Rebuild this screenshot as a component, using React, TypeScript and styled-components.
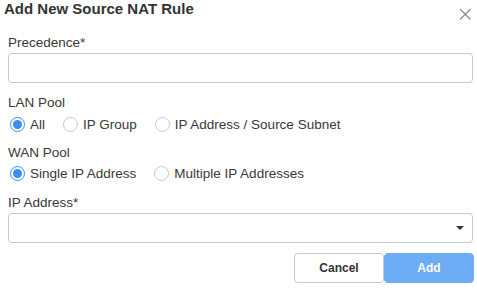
import React from "react";
import styled, { createGlobalStyle } from "styled-components";

const Global = createGlobalStyle`
  html, body { margin: 0; padding: 0; background: #fff; }
  body { font-family: "Liberation Sans", Arial, sans-serif; color: #333; }
  * { box-sizing: border-box; }
`;

const Dialog = styled.div`
  width: 477px;
  height: 288px;
  display: flex;
  flex-direction: column;
`;

const Header = styled.div`
  display: flex;
  justify-content: space-between;
  align-items: flex-start;
  padding: 0 6px 0 4px;
`;

const Title = styled.h2`
  margin: 0;
  font-size: 15px;
  font-weight: 700;
  color: #333;
  line-height: 18px;
`;

const Close = styled.button`
  border: 0;
  background: none;
  padding: 0;
  margin-top: 8px;
  width: 12px;
  height: 12px;
  display: flex;
  cursor: pointer;
`;

const Body = styled.div`
  display: flex;
  flex-direction: column;
  padding: 0 4px 0 8px;
`;

const Field = styled.div<{ $top: number }>`
  display: flex;
  flex-direction: column;
  margin-top: ${(p) => p.$top}px;
`;

const Label = styled.label<{ $gap?: number }>`
  font-size: 13.5px;
  color: #383838;
  line-height: 18px;
  margin-bottom: ${(p) => p.$gap ?? 1}px;
`;

const Input = styled.input`
  width: 465px;
  height: 30px;
  border: 1px solid #c8c8c8;
  border-radius: 4px;
  outline: none;
`;

const RadioRow = styled.div`
  display: flex;
  align-items: center;
  gap: 16px;
  height: 22px;
`;

const RadioOption = styled.label`
  display: flex;
  align-items: center;
  gap: 5px;
  font-size: 13.5px;
  color: #383838;
  cursor: pointer;
`;

const Circle = styled.span<{ $checked?: boolean }>`
  width: 15px;
  height: 15px;
  border-radius: 50%;
  border: 1px solid ${(p) => (p.$checked ? "#3b8ef0" : "#c9c9c9")};
  display: inline-flex;
  align-items: center;
  justify-content: center;
  margin-left: 2px;
  &::after {
    content: "";
    width: 9px;
    height: 9px;
    border-radius: 50%;
    background: ${(p) => (p.$checked ? "#3b8ef0" : "transparent")};
  }
`;

const Select = styled.div`
  width: 465px;
  height: 30px;
  border: 1px solid #c8c8c8;
  border-radius: 4px;
  display: flex;
  align-items: center;
  justify-content: flex-end;
  padding-right: 8px;
`;

const Caret = styled.span`
  width: 0;
  height: 0;
  border-left: 4px solid transparent;
  border-right: 4px solid transparent;
  border-top: 4px solid #333;
`;

const Footer = styled.div`
  display: flex;
  justify-content: flex-end;
  margin-top: 10px;
  width: 466px;
`;

const Button = styled.button<{ $primary?: boolean }>`
  width: 90px;
  height: 30px;
  border-radius: 4px;
  font-family: "Liberation Sans", Arial, sans-serif;
  font-weight: 700;
  font-size: 12px;
  border: 1px solid ${(p) => (p.$primary ? "#6cacf4" : "#c8c8c8")};
  background: ${(p) => (p.$primary ? "#6cacf4" : "#fff")};
  color: ${(p) => (p.$primary ? "#fff" : "#333")};
  cursor: pointer;
`;

function Radio({ label, checked }: { label: string; checked?: boolean }) {
  return (
    <RadioOption>
      <Circle $checked={checked} />
      {label}
    </RadioOption>
  );
}

export default function App() {
  return (
    <>
      <Global />
      <Dialog>
        <Header>
          <Title>Add New Source NAT Rule</Title>
          <Close aria-label="Close">
            <svg width="12" height="12" viewBox="0 0 12 12">
              <path d="M1 1 L11.5 11.5 M11.5 1 L1 11.5" stroke="#8a8a8a" strokeWidth="1.2" />
            </svg>
          </Close>
        </Header>
        <Body>
          <Field $top={14}>
            <Label>Precedence*</Label>
            <Input />
          </Field>
          <Field $top={11}>
            <Label $gap={1}>LAN Pool</Label>
            <RadioRow>
              <Radio label="All" checked />
              <Radio label="IP Group" />
              <Radio label="IP Address / Source Subnet" />
            </RadioRow>
          </Field>
          <Field $top={9}>
            <Label $gap={0}>WAN Pool</Label>
            <RadioRow>
              <Radio label="Single IP Address" checked />
              <Radio label="Multiple IP Addresses" />
            </RadioRow>
          </Field>
          <Field $top={10}>
            <Label>IP Address*</Label>
            <Select>
              <Caret />
            </Select>
          </Field>
          <Footer>
            <Button>Cancel</Button>
            <Button $primary>Add</Button>
          </Footer>
        </Body>
      </Dialog>
    </>
  );
}
